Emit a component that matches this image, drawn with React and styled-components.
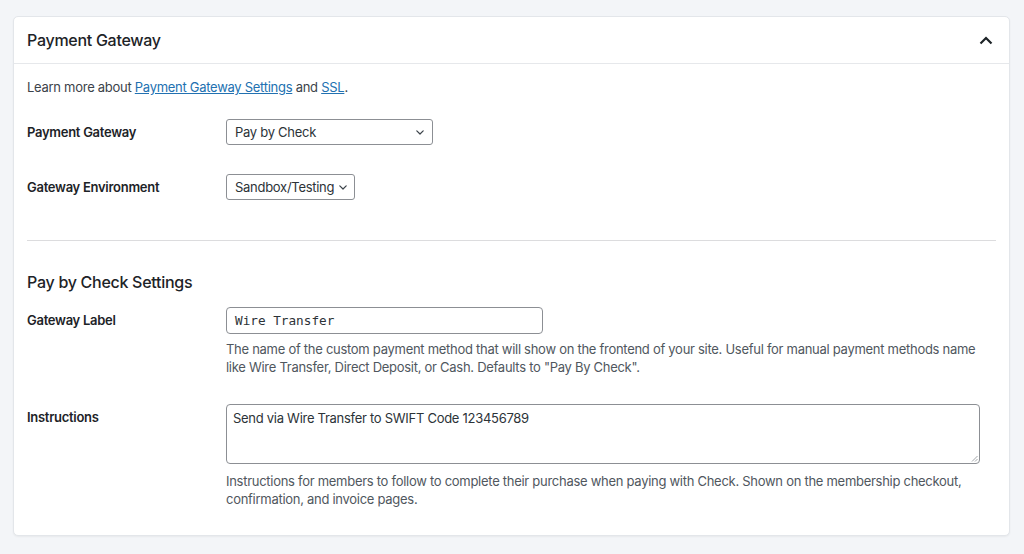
import React from "react";
import styled, { createGlobalStyle } from "styled-components";

const Global = createGlobalStyle`
  html, body { margin: 0; padding: 0; background: #f3f5f8; }
  body { font-family: Inter, "Noto Sans", sans-serif; color: #1d2327; letter-spacing: -0.28px; }
  * { box-sizing: border-box; }
`;

const Page = styled.div`
  padding: 16px 14px 18px 13px;
`;

const Card = styled.section`
  background: #fff;
  border: 1px solid #e3e6ea;
  border-radius: 5px;
  box-shadow: 0 1px 2px rgba(0, 0, 0, 0.05);
`;

const Header = styled.div`
  display: flex;
  align-items: center;
  justify-content: space-between;
  height: 47px;
  padding: 0 16px 0 13px;
  border-bottom: 1px solid #e6e8eb;
`;

const Title = styled.h2`
  margin: 0;
  font-size: 16px;
  font-weight: 500;
  color: #1d2327;
`;

const Body = styled.div`
  padding: 14px 13px 27px 13px;
`;

const Intro = styled.p`
  margin: 0 0 23px;
  font-size: 13px;
  line-height: 18px;
  color: #3c434a;
`;

const Link = styled.a`
  color: #2271b1;
  text-decoration: underline;
`;

const Row = styled.div`
  display: grid;
  grid-template-columns: 199px 1fr;
  align-items: ${(p) => (p.$top ? "start" : "center")};
  margin-bottom: ${(p) => p.$mb || 0}px;
`;

const Label = styled.label`
  font-size: 13px;
  font-weight: 600;
  color: #1d2327;
  line-height: 18px;
  padding-top: ${(p) => p.$pt || 0}px;
`;

const SelectBox = styled.div`
  display: flex;
  align-items: center;
  justify-content: space-between;
  gap: 5px;
  width: ${(p) => p.$w}px;
  height: 26px;
  padding: 0 8px 0 8px;
  border: 1px solid #8c8f94;
  border-radius: 3px;
  font-size: 13px;
  color: #2c3338;
  background: #fff;
  white-space: nowrap;
`;

const TextInput = styled.div`
  display: flex;
  align-items: center;
  width: 317px;
  height: 27px;
  padding: 0 8px;
  border: 1px solid #8c8f94;
  border-radius: 4px;
  font-family: "DejaVu Sans Mono", "Liberation Mono", monospace;
  font-size: 12.7px;
  letter-spacing: 0;
  color: #2c3338;
`;

const TextArea = styled.div`
  position: relative;
  width: 754px;
  height: 60px;
  padding: 4px 6px;
  border: 1px solid #8c8f94;
  border-radius: 4px;
  font-size: 13px;
  line-height: 18px;
  color: #2c3338;
`;

const Grip = styled.svg`
  position: absolute;
  right: 1px;
  bottom: 1px;
`;

const Field = styled.div`
  display: flex;
  flex-direction: column;
`;

const Desc = styled.p`
  margin: ${(p) => p.$mt || 6}px 0 0;
  font-size: 13px;
  line-height: 18px;
  color: #50575e;
  max-width: 760px;
`;

const Divider = styled.hr`
  border: 0;
  border-top: 1px solid #dcdcde;
  margin: 40px 0 30px;
`;

const SubTitle = styled.h3`
  margin: 0 0 14px;
  font-size: 16px;
  font-weight: 500;
  color: #1d2327;
  line-height: 22px;
`;

const ArrowIcon = styled.svg`
  flex: none;
`;

const Chevron = () => (
  <ArrowIcon width="8" height="5" viewBox="0 0 8 5" fill="none">
    <path d="M0.8 0.8L4 4l3.2-3.2" stroke="#3c434a" strokeWidth="1.2" strokeLinecap="round" strokeLinejoin="round" />
  </ArrowIcon>
);

export default function App() {
  return (
    <>
      <Global />
      <Page>
        <Card>
          <Header>
            <Title>Payment Gateway</Title>
            <svg width="14" height="9" viewBox="0 0 14 9" fill="none">
              <path d="M1.5 7.5L7 2l5.5 5.5" stroke="#1d2327" strokeWidth="2.2" />
            </svg>
          </Header>
          <Body>
            <Intro>
              Learn more about <Link href="#">Payment Gateway Settings</Link> and{" "}
              <Link href="#">SSL</Link>.
            </Intro>
            <Row $mb={29}>
              <Label>Payment Gateway</Label>
              <SelectBox $w={207}>
                <span>Pay by Check</span>
                <Chevron />
              </SelectBox>
            </Row>
            <Row>
              <Label>Gateway Environment</Label>
              <SelectBox $w={129}>
                <span>Sandbox/Testing</span>
                <Chevron />
              </SelectBox>
            </Row>
            <Divider />
            <SubTitle>Pay by Check Settings</SubTitle>
            <Row $top $mb={28}>
              <Label $pt={4}>Gateway Label</Label>
              <Field>
                <TextInput>Wire Transfer</TextInput>
                <Desc>
                  The name of the custom payment method that will show on the frontend of your site. Useful for manual payment methods name like Wire Transfer, Direct Deposit, or Cash. Defaults to "Pay By Check".
                </Desc>
              </Field>
            </Row>
            <Row $top>
              <Label $pt={4}>Instructions</Label>
              <Field>
                <TextArea>
                  Send via Wire Transfer to SWIFT Code 123456789
                  <Grip width="7" height="7" viewBox="0 0 7 7">
                    <path d="M6.5 1L1 6.5M6.5 4L4 6.5" stroke="#8c8f94" strokeWidth="0.8" />
                  </Grip>
                </TextArea>
                <Desc $mt={8}>
                  Instructions for members to follow to complete their purchase when paying with Check. Shown on the membership checkout, confirmation, and invoice pages.
                </Desc>
              </Field>
            </Row>
          </Body>
        </Card>
      </Page>
    </>
  );
}
